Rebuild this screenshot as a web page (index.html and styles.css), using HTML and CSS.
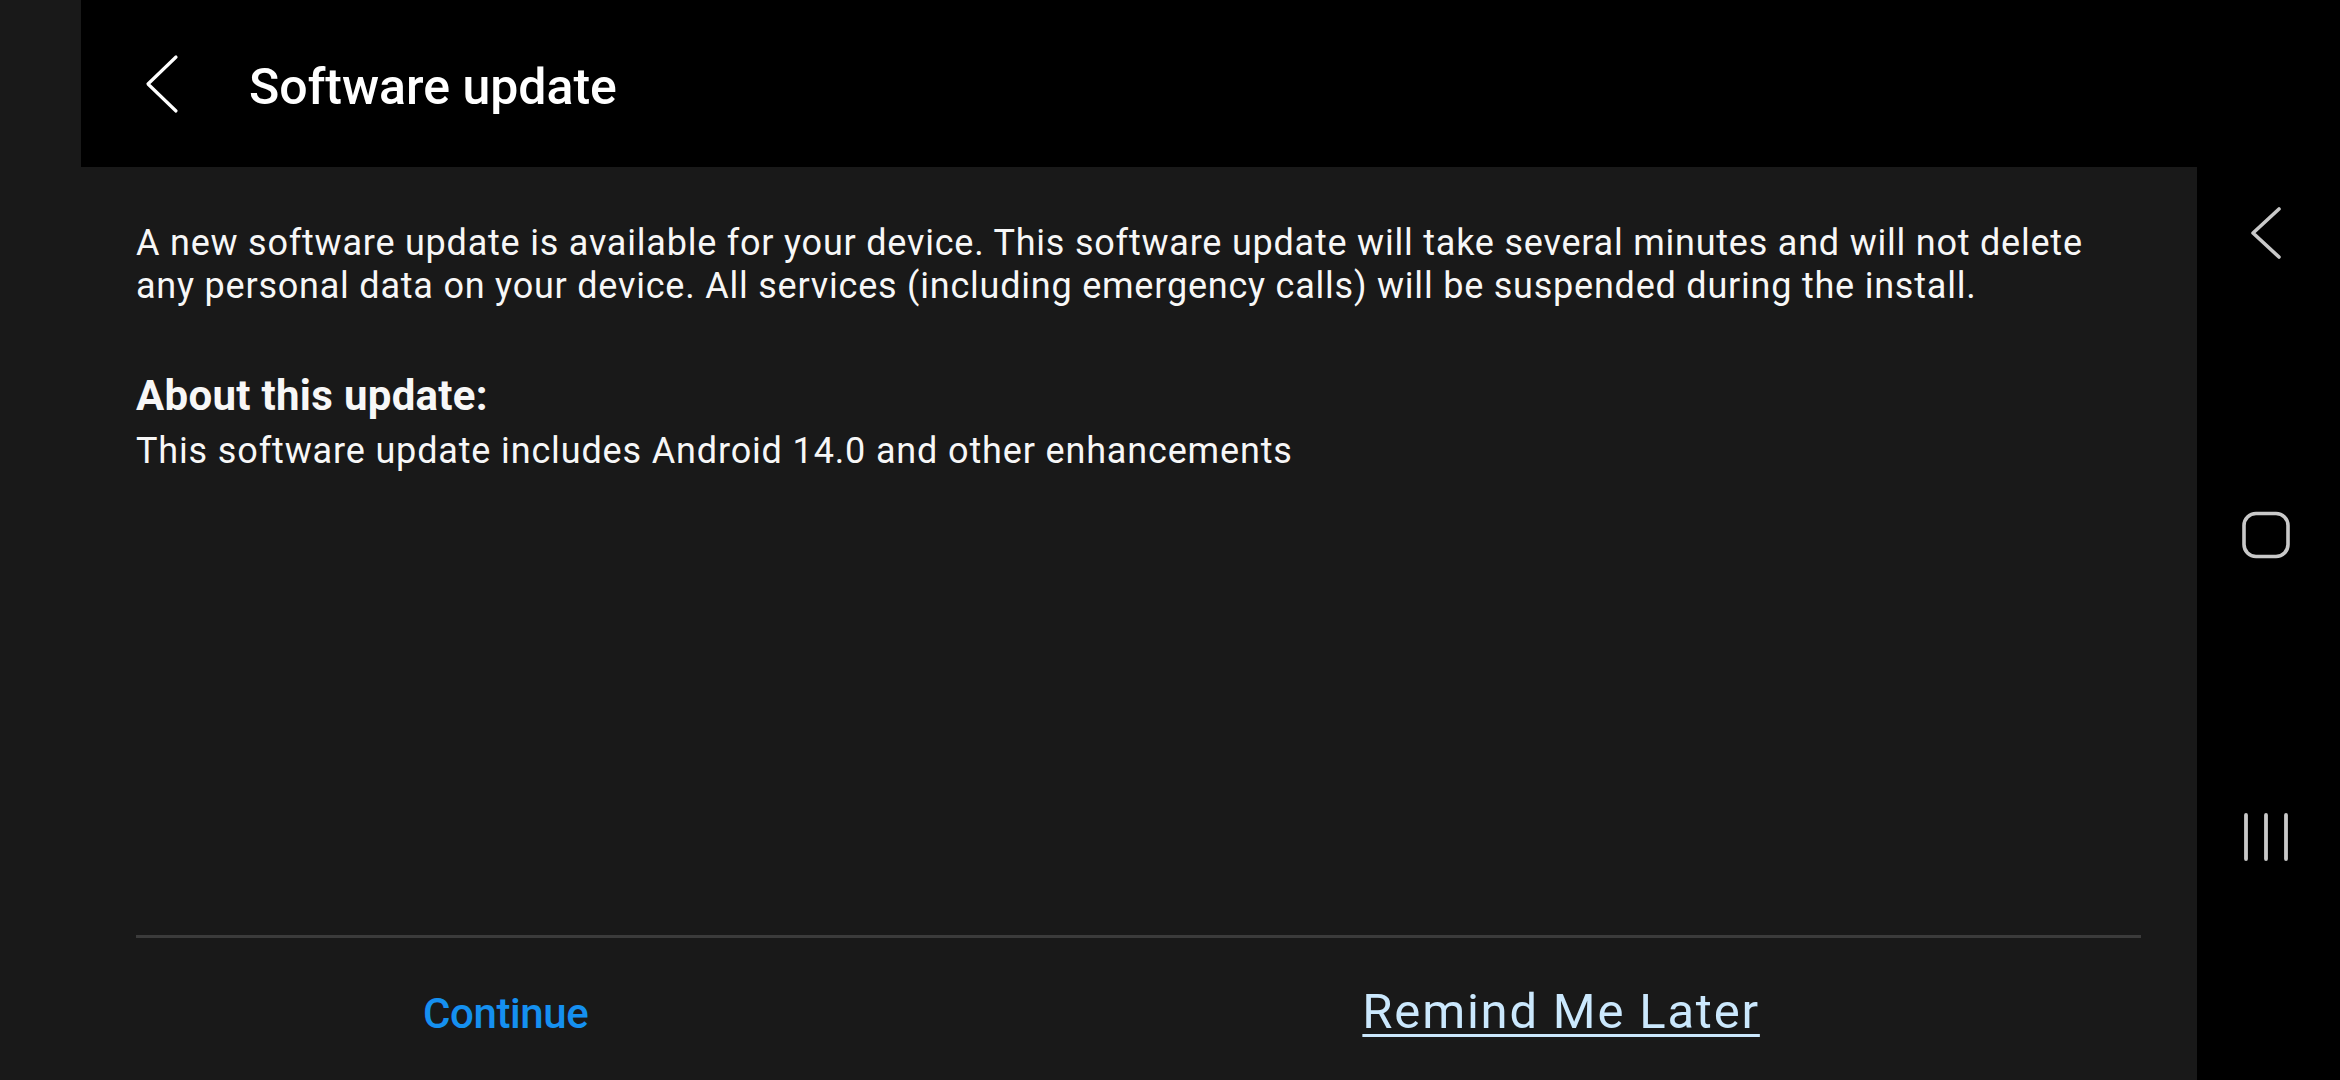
FILE: index.html
```html
<!DOCTYPE html>
<html lang="en">
<head>
<meta charset="utf-8">
<title>Software update</title>
<link rel="stylesheet" href="styles.css">
</head>
<body>
<div class="screen">
  <div class="gutter"></div>
  <main class="main">
    <header class="appbar">
      <svg class="appbar-back" width="34" height="60" viewBox="0 0 34 60">
        <polyline points="31,3 3,30 31,57" fill="none" stroke="#ffffff" stroke-width="3.2" stroke-linecap="round" stroke-linejoin="round"/>
      </svg>
      <h1 class="title">Software update</h1>
    </header>
    <section class="content">
      <div class="details">
        <p class="intro">A new software update is available for your device. This software update will take several minutes and will not delete any personal data on your device. All services (including emergency calls) will be suspended during the install.</p>
        <h2 class="about">About this update:</h2>
        <p class="desc">This software update includes Android 14.0 and other enhancements</p>
      </div>
      <div class="divider"></div>
      <div class="actions">
        <a class="btn-continue">Continue</a>
        <a class="btn-remind">Remind Me Later</a>
      </div>
    </section>
  </main>
  <nav class="navbar">
    <div class="nav-item">
      <svg width="60" height="60" viewBox="0 0 60 60">
        <polyline points="43,6 17,30 43,54" fill="none" stroke="#c9c9c9" stroke-width="3.6" stroke-linecap="round" stroke-linejoin="round"/>
      </svg>
    </div>
    <div class="nav-item">
      <svg width="60" height="60" viewBox="0 0 60 60">
        <rect x="8" y="8.5" width="44" height="43" rx="12" ry="12" fill="none" stroke="#c9c9c9" stroke-width="3.6"/>
      </svg>
    </div>
    <div class="nav-item">
      <svg width="60" height="60" viewBox="0 0 60 60">
        <line x1="10" y1="8" x2="10" y2="52" stroke="#c9c9c9" stroke-width="3.8" stroke-linecap="round"/>
        <line x1="30" y1="8" x2="30" y2="52" stroke="#c9c9c9" stroke-width="3.8" stroke-linecap="round"/>
        <line x1="50" y1="8" x2="50" y2="52" stroke="#c9c9c9" stroke-width="3.8" stroke-linecap="round"/>
      </svg>
    </div>
  </nav>
</div>
</body>
</html>
```

FILE: styles.css
```css
* {
  box-sizing: border-box;
}

html, body {
  margin: 0;
  padding: 0;
}

body {
  background: #191919;
  font-family: Roboto, "Noto Sans", "Liberation Sans", sans-serif;
  color: #f7f7f7;
}

.screen {
  display: flex;
  width: 2340px;
  height: 1080px;
  overflow: hidden;
}

.gutter {
  width: 81px;
  flex: none;
  background: #191919;
}

.main {
  width: 2116px;
  flex: none;
  display: flex;
  flex-direction: column;
  background: #191919;
}

.appbar {
  height: 167px;
  flex: none;
  background: #000000;
  display: flex;
  align-items: center;
  padding-left: 64px;
}

.appbar-back {
  display: block;
  margin-top: 1px;
}

.title {
  margin: 6px 0 0 70px;
  font-size: 50px;
  font-weight: 500;
  line-height: 60px;
  color: #ffffff;
}

.content {
  flex: 1;
  display: flex;
  flex-direction: column;
  padding: 0 56px 0 55px;
}

.details {
  padding-top: 55px;
}

.intro {
  margin: 0;
  font-size: 36px;
  line-height: 43px;
  letter-spacing: 0.78px;
  color: #f7f7f7;
}

.about {
  margin: 63px 0 0 0;
  font-size: 42px;
  font-weight: 700;
  line-height: 50px;
  letter-spacing: 0.3px;
  color: #f7f7f7;
}

.desc {
  margin: 9px 0 0 0;
  font-size: 36px;
  line-height: 43px;
  letter-spacing: 0.85px;
  color: #f7f7f7;
}

.divider {
  margin-top: auto;
  height: 3px;
  background: #3b3b3b;
  flex: none;
}

.actions {
  height: 142px;
  flex: none;
  display: flex;
  align-items: baseline;
  padding-top: 45px;
}

.btn-continue {
  margin-left: 287px;
  font-size: 42px;
  font-weight: 500;
  line-height: 58px;
  letter-spacing: -0.4px;
  color: #1590f0;
}

.btn-remind {
  margin-left: 774px;
  font-size: 49px;
  font-weight: 400;
  line-height: 58px;
  letter-spacing: 1.8px;
  color: #cbe8fd;
  text-decoration: underline;
  text-decoration-thickness: 3px;
  text-underline-offset: 6px;
}

.navbar {
  width: 143px;
  flex: none;
  background: #000000;
  display: flex;
  flex-direction: column;
  align-items: center;
  padding-top: 203px;
  padding-right: 6px;
  gap: 242px;
}

.nav-item {
  width: 60px;
  height: 60px;
}

.nav-item svg {
  display: block;
}
```
